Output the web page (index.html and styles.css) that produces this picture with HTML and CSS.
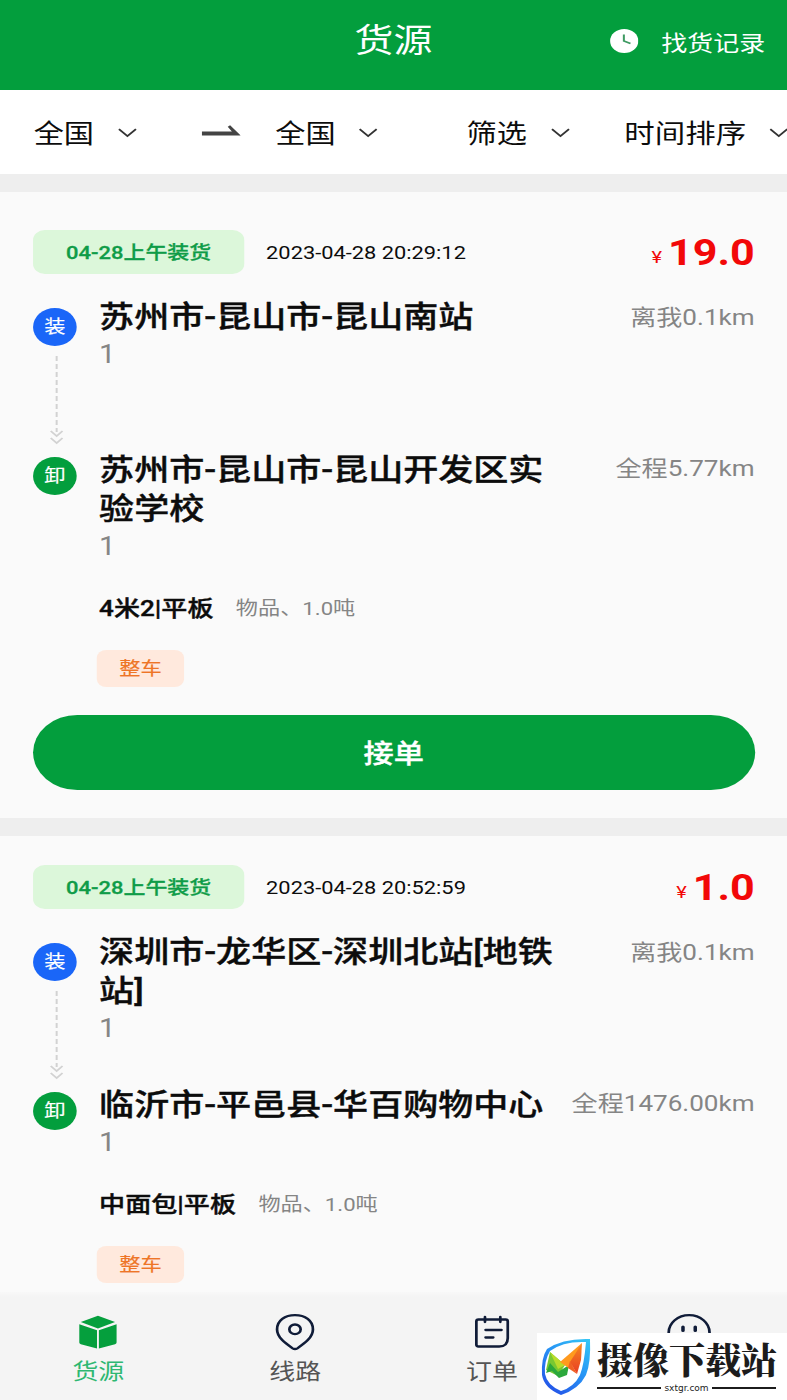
FILE: index.html
```
<!DOCTYPE html>
<html lang="zh-CN">
  <head>
    <meta charset="UTF-8" />
    <meta name="viewport" content="width=device-width, initial-scale=1.0" />
    <title>货源</title>
    <link rel="stylesheet" href="styles.css" />
  </head>
  <body>
    <div class="app">
      <header class="header">
        <h1>货源</h1>
        <a class="history">
          <svg width="24" height="24" viewBox="0 0 24 24">
            <circle cx="12" cy="12" r="12" fill="#fff" />
            <path d="M11.7 5.5v6.500l5.600 2.600" fill="none" stroke="#3f9a62" stroke-width="1.7" />
          </svg>
          <span>找货记录</span>
        </a>
      </header>

      <nav class="filters">
        <div class="filter from">
          <span>全国</span>
          <svg class="chevron" viewBox="0 0 16 10"><path d="M.8 1.2 8 8l7.2-6.8" /></svg>
        </div>
        <svg class="arrow" width="33" height="12" viewBox="0 0 33 12">
          <path d="M0 6.500h25.500L22 1.800 24 .3 33 10.500H0z" fill="#444" />
        </svg>
        <div class="filter to">
          <span>全国</span>
          <svg class="chevron" viewBox="0 0 16 10"><path d="M.8 1.2 8 8l7.2-6.8" /></svg>
        </div>
        <div class="filter pick">
          <span>筛选</span>
          <svg class="chevron" viewBox="0 0 16 10"><path d="M.8 1.2 8 8l7.2-6.8" /></svg>
        </div>
        <div class="filter sort">
          <span>时间排序</span>
          <svg class="chevron" viewBox="0 0 16 10"><path d="M.8 1.2 8 8l7.2-6.8" /></svg>
        </div>
      </nav>

      <main class="list">
        <section class="card">
          <div class="card-head">
            <span class="load-time">04-28上午装货</span>
            <span class="date">2023-04-28 20:29:12</span>
            <span class="price"><small>¥</small>19.0</span>
          </div>
          <div class="stop start">
            <div class="track">
              <span class="dot blue">装</span>
              <svg class="line" width="12" height="90" viewBox="0 0 12 90">
                <path d="M6 0v76" stroke-dasharray="5 3" />
                <path d="M1 75l5 5 5-5M1 82l5 5 5-5" />
              </svg>
            </div>
            <div class="place">
              <h2>苏州市-昆山市-昆山南站</h2>
              <p>1</p>
            </div>
            <span class="distance">离我0.1km</span>
          </div>
          <div class="stop end">
            <div class="track"><span class="dot green">卸</span></div>
            <div class="place">
              <h2>苏州市-昆山市-昆山开发区实验学校</h2>
              <p>1</p>
            </div>
            <span class="distance">全程5.77km</span>
          </div>
          <div class="cargo"><strong>4米2|平板</strong><span>物品、1.0吨</span></div>
          <span class="tag">整车</span>
          <button class="accept">接单</button>
        </section>

        <section class="card">
          <div class="card-head">
            <span class="load-time">04-28上午装货</span>
            <span class="date">2023-04-28 20:52:59</span>
            <span class="price"><small>¥</small>1.0</span>
          </div>
          <div class="stop start">
            <div class="track">
              <span class="dot blue">装</span>
              <svg class="line" width="12" height="90" viewBox="0 0 12 90">
                <path d="M6 0v76" stroke-dasharray="5 3" />
                <path d="M1 75l5 5 5-5M1 82l5 5 5-5" />
              </svg>
            </div>
            <div class="place">
              <h2>深圳市-龙华区-深圳北站[地铁站]</h2>
              <p>1</p>
            </div>
            <span class="distance">离我0.1km</span>
          </div>
          <div class="stop end">
            <div class="track"><span class="dot green">卸</span></div>
            <div class="place">
              <h2>临沂市-平邑县-华百购物中心</h2>
              <p>1</p>
            </div>
            <span class="distance">全程1476.00km</span>
          </div>
          <div class="cargo"><strong>中面包|平板</strong><span>物品、1.0吨</span></div>
          <span class="tag">整车</span>
        </section>
      </main>

      <footer class="tabbar">
        <a class="tab active">
          <svg width="40" height="40" viewBox="0 0 40 40" fill="#059f3d">
            <path d="M20 2.700 34.500 9 20 15.500 5.500 9z" />
            <path d="M4.200 11.300 19.200 17.300V35.500L5.500 31.300Q4.200 30.800 4.200 29.500zM35.800 11.300 20.800 17.300V35.500L34.500 31.300Q35.800 30.800 35.800 29.500z" />
          </svg>
          <span>货源</span>
        </a>
        <a class="tab">
          <svg width="40" height="40" viewBox="0 0 40 40" fill="none" stroke="#101c38" stroke-width="2.300">
            <path d="M18 35.300C12 30.500 4.800 24.500 4.800 16.500C4.800 7.500 11.500 2.200 20 2.200S35.200 7.500 35.200 16.500C35.200 24.500 28 30.500 22 35.300Q20 36.800 18 35.300z" />
            <circle cx="20" cy="16.300" r="4.800" />
          </svg>
          <span>线路</span>
        </a>
        <a class="tab">
          <svg width="40" height="40" viewBox="0 0 40 40" fill="none" stroke="#101c38" stroke-width="2.300" stroke-linecap="round">
            <path d="M8.500 6.500h23Q33.300 6.500 33.300 8.500V25Q33.300 33.500 26 33.500H8.500Q6.700 33.500 6.700 31.500V8.500Q6.700 6.500 8.500 6.500zM14 4v5M27 4v5M14.500 17h13.500M14.500 24.500h6.500" />
          </svg>
          <span>订单</span>
        </a>
        <a class="tab">
          <svg width="40" height="40" viewBox="0 0 40 40" fill="none" stroke="#101c38" stroke-width="2.300" stroke-linecap="round">
            <circle cx="20" cy="19.500" r="17.300" />
            <path d="M14.800 14v3.500M25.200 14v3.500" stroke-width="3" />
            <path d="M12 25q8 7 16 0" />
          </svg>
        </a>
      </footer>
    </div>

    <div class="watermark">
      <svg width="50" height="58" viewBox="0 0 50 58">
        <defs>
          <linearGradient id="shield" x1="1" y1="0" x2="0.300" y2="1">
            <stop offset="0" stop-color="#35c8f5" />
            <stop offset="0.500" stop-color="#2795f5" />
            <stop offset="1" stop-color="#2456e8" />
          </linearGradient>
          <linearGradient id="flame" x1="0" y1="0" x2="0" y2="1">
            <stop offset="0" stop-color="#f58a20" />
            <stop offset="1" stop-color="#e93c24" />
          </linearGradient>
        </defs>
        <path fill="url(#shield)" fill-rule="evenodd" d="M49 1Q50 25 45 37Q38 51 20 57Q3 50 1 37Q0 20 6 11Q22 0 49 1zM45 4Q22 3 9 13Q3 23 4 36Q6 47 20 53Q33 49 39 37Q43 27 45 4z" />
        <path fill="#78c832" d="M9 14 24 27 17 38 5 32z" />
        <path fill="#2ba83c" d="M5 35 9 25 17 34 28 27 26 37 18 40 11 33z" />
        <path fill="#b9dc2b" d="M9 14 24 27 17 31z" />
        <path fill="#ff9a1e" d="M41 5 19 24 29 31z" />
        <path fill="url(#flame)" d="M41 5 29 24 36 36 40 22z" />
        <path fill="#f06224" d="M29 23 27 30 36 36z" />
      </svg>
      <div class="brand">
        <div class="brand-name">摄像下载站</div>
        <div class="brand-url">sxtgr.com</div>
      </div>
    </div>
  </body>
</html>
```
FILE: styles.css
```
:root {
  --primary: #039e3d;
  --blue: #1a66f8;
  --text: #0c0c0c;
  --muted: #858585;
  --stretch: 1.18;
}

* {
  box-sizing: border-box;
}

body {
  margin: 0;
  height: 1400px;
  overflow: hidden;
  background: #fafafa;
  color: var(--text);
  font-family: Roboto, "Noto Sans CJK SC", sans-serif;
}

h1,
h2,
p {
  margin: 0;
}

.app {
  width: 667px;
  height: 1400px;
  overflow: hidden;
  display: flex;
  flex-direction: column;
  transform: scaleX(var(--stretch));
  transform-origin: 0 0;
}

.header {
  flex: none;
  height: 90px;
  display: grid;
  grid-template-columns: 1fr auto 1fr;
  align-items: center;
  padding-bottom: 9px;
  background: var(--primary);
  color: #fff;
}

.header h1 {
  grid-column: 2;
  font-size: 33px;
  font-weight: 400;
  line-height: 40px;
}

.history {
  display: flex;
  align-items: center;
  justify-content: flex-end;
  gap: 19px;
  padding: 1px 18.5px 0 0;
  font-size: 22px;
}

.filters {
  flex: none;
  height: 84px;
  display: flex;
  align-items: center;
  padding-left: 28.5px;
  background: #fff;
  font-size: 25.6px;
  white-space: nowrap;
}

.filter {
  flex: none;
  display: flex;
  align-items: center;
  gap: 20px;
}

.filter span {
  margin-top: -2px;
}

.chevron {
  width: 16px;
  height: 10px;
  margin-top: 1px;
  fill: none;
  stroke: #333;
  stroke-width: 1.7;
}

.arrow {
  flex: none;
  margin: 0 29.5px 2px 55px;
}

.pick {
  margin-left: 75px;
}

.sort {
  margin-left: 46.5px;
  font-size: 25.8px;
}

.list {
  flex: 1;
  min-height: 0;
  overflow: hidden;
}

.card {
  padding: 38px 27.5px 28px 28px;
  border-top: 18px solid #eee;
  background: #fafafa;
}

.card + .card {
  padding-top: 29px;
}

.card-head {
  display: flex;
  align-items: center;
  height: 44px;
  margin-bottom: 23px;
}

.load-time {
  width: 179px;
  height: 44px;
  border-radius: 10px;
  background: #dcf7da;
  color: #0f9c48;
  font-size: 18.6px;
  font-weight: 500;
  line-height: 46px;
  text-align: center;
  -webkit-text-stroke: 0.3px;
}

.date {
  margin: 2px 0 0 18.5px;
  font-size: 18.5px;
}

.price {
  display: flex;
  align-items: baseline;
  gap: 5px;
  margin: 1px 0 0 auto;
  color: #f20808;
  font-size: 36.5px;
  font-weight: 700;
}

.price small {
  position: relative;
  top: -2px;
  font-size: 17px;
  font-weight: 400;
}

.stop {
  display: flex;
  align-items: flex-start;
}

.stop.start {
  min-height: 153px;
}

.track {
  flex: none;
  width: 37px;
  margin-right: 19px;
  padding-top: 10.5px;
}

.end .track {
  padding-top: 7px;
}

.dot {
  display: block;
  width: 37px;
  height: 38px;
  border-radius: 50%;
  color: #fff;
  font-size: 18px;
  line-height: 37px;
  text-align: center;
  -webkit-text-stroke: 0.15px;
}

.blue {
  background: var(--blue);
}

.green {
  background: var(--primary);
}

.line {
  display: block;
  margin: 10.5px 0 0 14px;
  fill: none;
  stroke: #d2d2d2;
  stroke-width: 1.7;
}

.place {
  flex: none;
  width: 388px;
}

.place h2 {
  font-size: 29.7px;
  font-weight: 500;
  line-height: 39px;
  -webkit-text-stroke: 0.4px;
}

.place p {
  color: var(--muted);
  font-size: 25px;
  line-height: 38px;
  height: 36px;
}

.distance {
  margin-left: auto;
  color: var(--muted);
  font-size: 22.1px;
  line-height: 40px;
  white-space: nowrap;
}

.end .distance {
  line-height: 37px;
}

.cargo {
  display: flex;
  align-items: center;
  gap: 19px;
  height: 30px;
  margin: 27px 0 29px 56px;
}

.cargo strong {
  font-size: 22.1px;
  font-weight: 500;
  -webkit-text-stroke: 0.4px;
}

.cargo span {
  color: var(--muted);
  font-size: 18.8px;
}

.tag {
  display: block;
  width: 74px;
  height: 37px;
  margin-left: 54px;
  border-radius: 8px;
  background: #ffe9dd;
  color: #ee7526;
  font-size: 18px;
  line-height: 38px;
  text-align: center;
  -webkit-text-stroke: 0.15px;
}

.accept {
  display: block;
  width: 100%;
  height: 75px;
  margin-top: 28px;
  padding: 0 0 2px;
  border: none;
  border-radius: 38px;
  background: var(--primary);
  color: #fff;
  font-family: inherit;
  font-size: 25.6px;
  font-weight: 500;
  -webkit-text-stroke: 0.35px;
}

.tabbar {
  flex: none;
  height: 108px;
  display: flex;
  background: linear-gradient(#f8f8f8, #f4f4f4 5px);
}

.tab {
  flex: 1;
  display: flex;
  flex-direction: column;
  align-items: center;
  padding-top: 21px;
  color: #555;
  font-size: 22px;
  line-height: 37px;
}

.tab.active {
  color: #2eb872;
}

.watermark {
  position: fixed;
  right: 0;
  bottom: 0;
  width: 250px;
  height: 67px;
  display: flex;
  padding: 5px 0 0 4px;
  background: #fff;
}

.brand {
  margin-left: 6px;
  width: 179px;
  color: #1c1c1c;
}

.brand-name {
  font-family: "Noto Serif CJK SC", "Noto Sans CJK SC", serif;
  font-size: 36px;
  font-weight: 900;
  line-height: 42px;
  white-space: nowrap;
}

.brand-url {
  display: flex;
  align-items: center;
  gap: 3px;
  font-family: "DejaVu Sans", sans-serif;
  font-size: 9px;
  line-height: 16px;
}

.brand-url::before,
.brand-url::after {
  content: "";
  flex: 1;
  height: 2px;
  background: #1c1c1c;
}
```
